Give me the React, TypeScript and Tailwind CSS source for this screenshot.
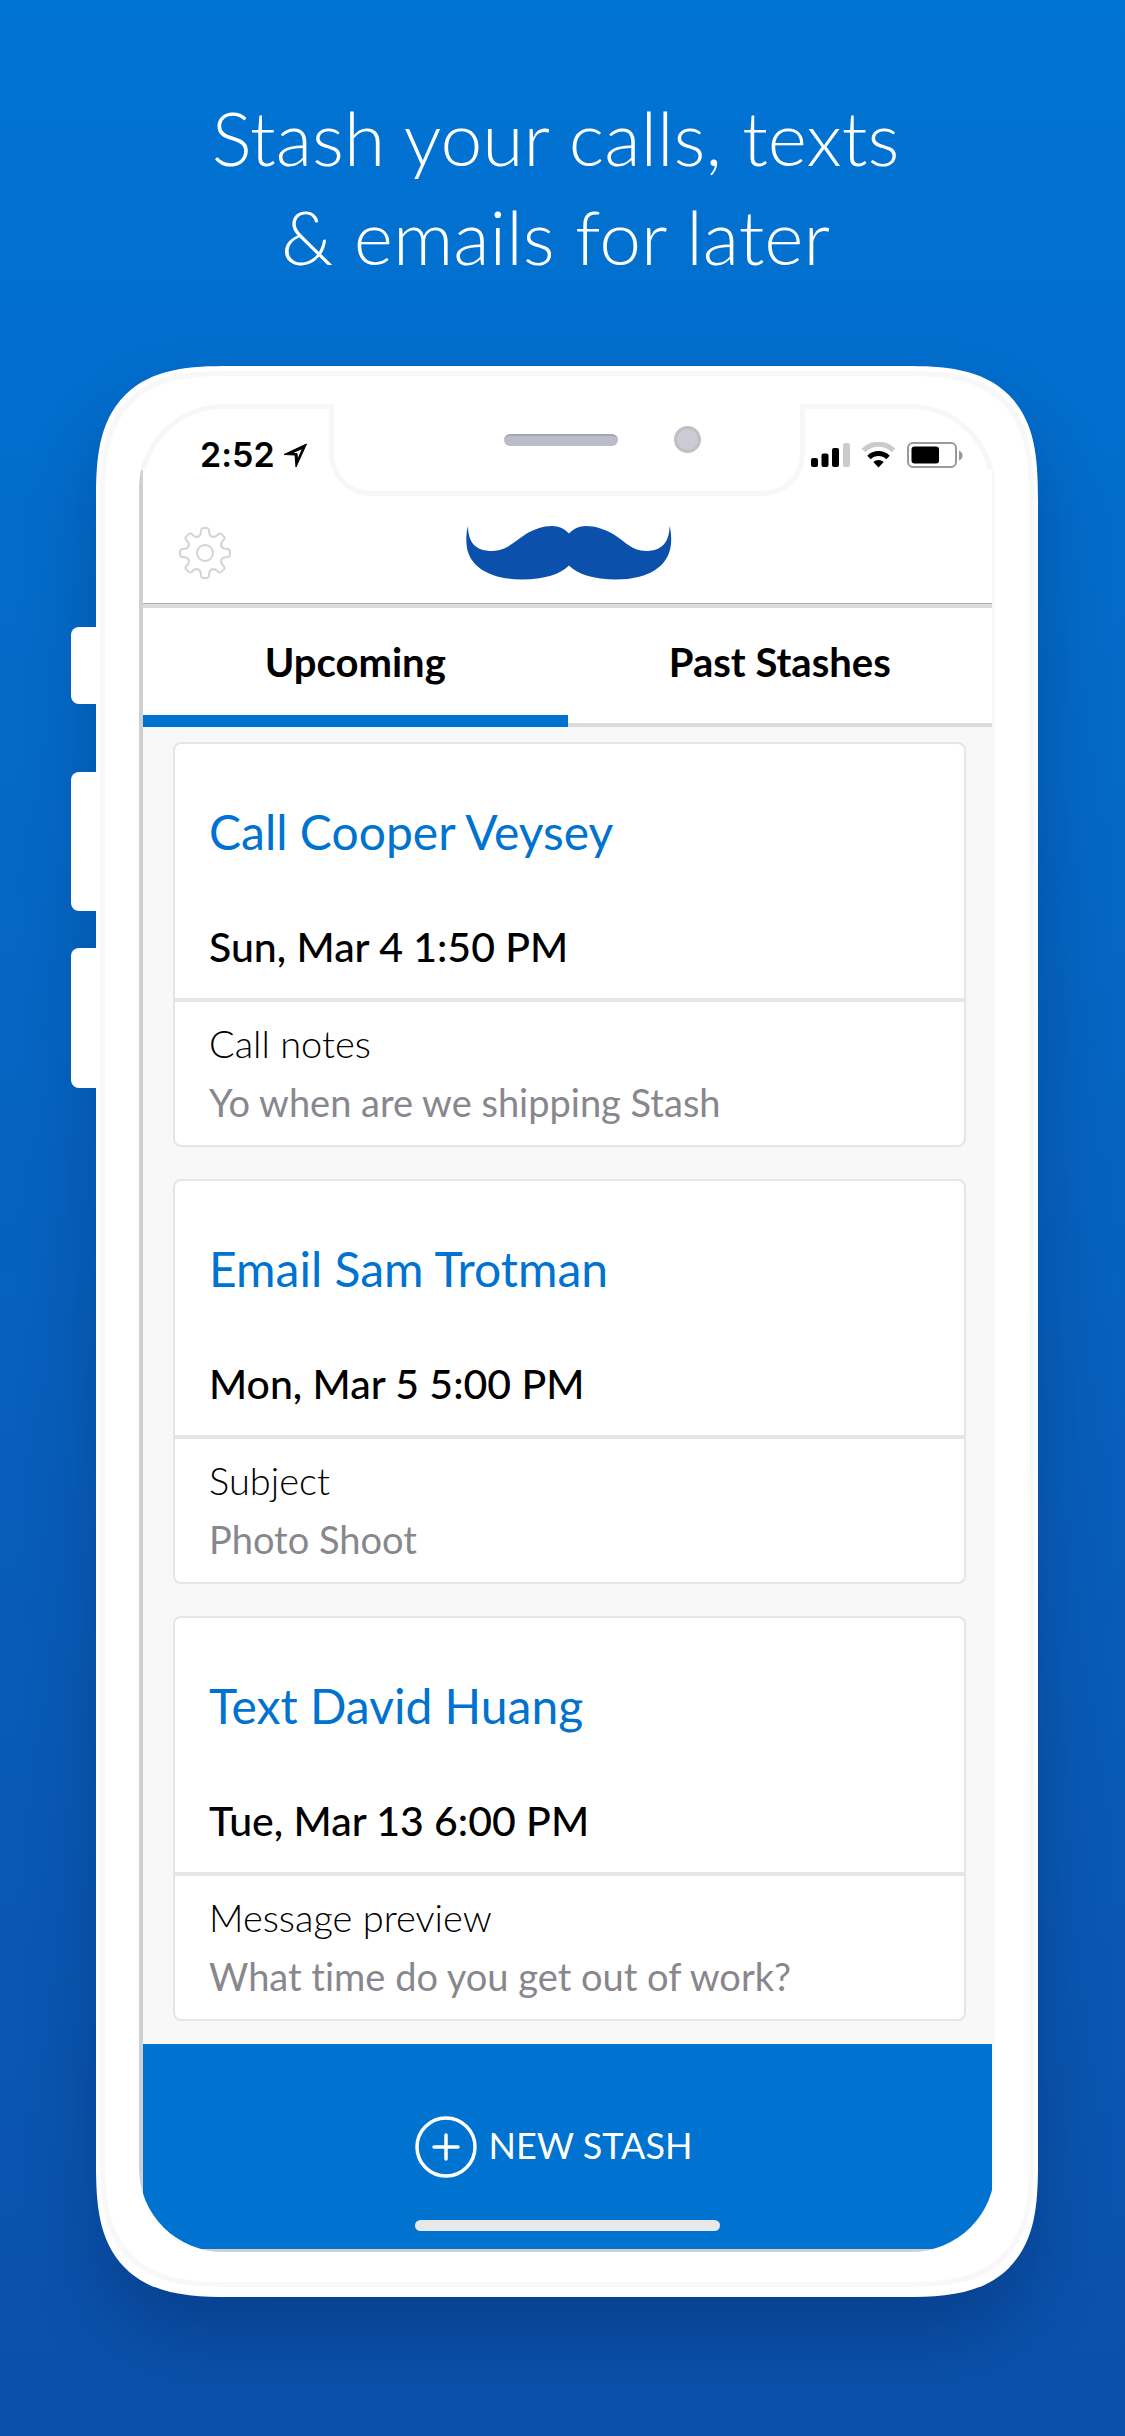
import { useState } from 'react';

const STASHES = [
  { title: 'Call Cooper Veysey', date: 'Sun, Mar 4 1:50 PM', label: 'Call notes', note: 'Yo when are we shipping Stash' },
  { title: 'Email Sam Trotman', date: 'Mon, Mar 5 5:00 PM', label: 'Subject', note: 'Photo Shoot' },
  { title: 'Text David Huang', date: 'Tue, Mar 13 6:00 PM', label: 'Message preview', note: 'What time do you get out of work?' },
];

const TABS = ['Upcoming', 'Past Stashes'];

// eight-toothed cog, drawn on a 52px box
function gearPath() {
  const point = (r: number, deg: number) => {
    const a = (deg * Math.PI) / 180;
    return `${(26 + r * Math.cos(a)).toFixed(2)} ${(26 + r * Math.sin(a)).toFixed(2)}`;
  };
  let d = '';
  for (let i = 0; i < 8; i++) {
    const c = i * 45 - 90;
    d += `${i === 0 ? 'M' : 'L'}${point(19.5, c - 13)} L${point(24, c - 9)} Q${point(25.2, c - 7)} ${point(25, c - 4)} L${point(25, c + 4)} Q${point(25.2, c + 7)} ${point(24, c + 9)} L${point(19.5, c + 13)} Q${point(16.2, c + 22.5)} ${point(19.5, c + 32)} `;
  }
  return d + 'Z';
}

function GearIcon() {
  return (
    <svg className="w-[52px] h-[52px]" viewBox="0 0 52 52" fill="none" stroke="#d4d4d4" strokeWidth="2" strokeLinejoin="round">
      <path d={gearPath()} />
      <circle cx="26" cy="26" r="8" />
    </svg>
  );
}

function Mustache() {
  return (
    <svg className="w-[206px] h-[54px]" viewBox="0 0 206 54" fill="#0b50aa">
      <path d="M2 0C2 17 10 25 26 25C41 25 47 16 60 8C68 3.5 77 0 86 0C93 0 99 3 103 7.500C107 3 113 0 120 0C129 0 139 3.500 147 8C160 16 166 25 180 25C195 25 203.500 17 203.500 0C205 5 205.500 12 205 18C203 40 183 53.500 150 53.500C128 53.500 111 48 103 39.500C95 48 78 53.500 56 53.500C23 53.500 2 40 0.500 18C0 12 0.500 5 2 0Z" />
    </svg>
  );
}

function StatusIcons() {
  return (
    <svg className="w-[152px] h-[26px]" viewBox="0 0 152 26">
      <rect x="0" y="16" width="7" height="9" rx="2" />
      <rect x="10.500" y="11.500" width="7" height="13.500" rx="2" />
      <rect x="21" y="6" width="7" height="19" rx="2" />
      <rect x="32" y="1" width="7" height="24" rx="2" fill="#cbcbcb" />
      <path d="M52.500 8.500a21 21 0 0 1 30 0" fill="none" stroke="#cbcbcb" strokeWidth="5" />
      <path d="M58 15.500a13.500 13.500 0 0 1 19 0" fill="none" stroke="#000" strokeWidth="5" />
      <path d="M62.300 20a7.500 7.500 0 0 1 10.400 0L67.500 25.500z" />
      <rect x="97" y="1" width="48" height="24" rx="5" fill="none" stroke="#999" strokeWidth="2" />
      <rect x="100.500" y="4.500" width="27.500" height="17" rx="3" />
      <path d="M148 8.500q3.500 1.500 3.500 5t-3.500 5z" fill="#999" />
    </svg>
  );
}

function StashCard({ title, date, label, note }: (typeof STASHES)[number]) {
  return (
    <article className="h-[405px] bg-white border-2 border-[#e5e5e5] rounded-lg">
      <div className="h-[258px] px-[34px] border-b-4 border-[#e5e5e5]">
        <h2 className="pt-[58px] text-[48px] leading-[60px] text-[#0073d1]">{title}</h2>
        <p className="pt-[60px] text-[41px] leading-[50px] font-medium">{date}</p>
      </div>
      <div className="px-[34px] pt-3">
        <p className="text-[38px] leading-[59px] font-light">{label}</p>
        <p className="text-[38px] leading-[59px] text-[#87878d]">{note}</p>
      </div>
    </article>
  );
}

function Notch() {
  return (
    <div className="absolute top-0 left-1/2 -translate-x-1/2 w-[476px] h-[92px] border-[5px] border-t-0 border-[#f7f7f7] rounded-b-[42px] bg-white">
      <div className="absolute left-[170px] top-[30px] w-[114px] h-3 rounded-full bg-[#bbbcca] border-t-2 border-[#a6a7b0]" />
      <div className="absolute left-[340px] top-[22px] w-[27px] h-[27px] rounded-full bg-[#cbcbd6] border-[3px] border-[#bfbfc6]" />
    </div>
  );
}

export default function App() {
  const [tab, setTab] = useState(0);

  return (
    <main className="min-h-screen pb-[138px] overflow-hidden bg-gradient-to-b from-[#0074d4] to-[#0b50aa] font-[Lato,sans-serif] text-black [font-variant-ligatures:none]">
      <h1 className="pt-[88px] h-[366px] text-center text-[75px] leading-[99px] font-light text-white pr-[14px]">
        Stash your calls, texts
        <br />
        &amp; emails for later
      </h1>

      <div className="relative ml-24 mr-[87px] rounded-[104px] supports-[corner-shape:squircle]:rounded-[134px] [corner-shape:superellipse(1.5)] bg-white shadow-[0_40px_70px_rgba(0,20,70,0.28)]">
        {/* hardware buttons */}
        <div className="absolute -left-[25px] top-[261px] w-[25px] h-[77px] rounded-l-lg bg-white" />
        <div className="absolute -left-[25px] top-[406px] w-[25px] h-[139px] rounded-l-lg bg-white" />
        <div className="absolute -left-[25px] top-[582px] w-[25px] h-[140px] rounded-l-lg bg-white" />

        <div className="pt-[5px] px-1 pb-[10px]">
          <div className="border-[5px] border-[#f8f8f8] rounded-[100px] supports-[corner-shape:squircle]:rounded-[130px] [corner-shape:superellipse(1.5)] pt-7 px-[34px] pb-[30px]">
            <div className="relative">
              <div className="overflow-hidden rounded-[84px] bg-white">
                <div className="border-l-4 border-l-[#d0d0d0] border-b-[3px] border-b-[#d0d0d0] border-r-[3px] border-r-[#f7f7f7]">
                  <div className="flex justify-between items-center h-[97px] pt-[5px] pl-[57px] pr-[29px]">
                    <div className="flex items-center gap-2">
                      <span className="font-[Inter,sans-serif] font-semibold text-[34px] leading-10">2:52</span>
                      <svg className="w-6 h-6" viewBox="0 0 24 24" stroke="#000" strokeWidth="1">
                        <path d="M1 11.500L23.500 1L13 24L12 12z M8 10.500L14 10.500L14.500 17L19.500 5.500z" fillRule="evenodd" />
                      </svg>
                    </div>
                    <StatusIcons />
                  </div>

                  <header className="grid grid-cols-3 items-center h-[107px] border-b-4 border-[#dcdcdc] shadow-[inset_0_-1px_0_#b0b0b0] pl-9 pr-8">
                    <button aria-label="Settings" className="justify-self-start">
                      <GearIcon />
                    </button>
                    <div className="justify-self-center">
                      <Mustache />
                    </div>
                  </header>

                  <nav className="grid grid-cols-2 h-[119px]">
                    {TABS.map((name, i) => (
                      <button
                        key={name}
                        onClick={() => setTab(i)}
                        className={
                          i === tab
                            ? 'text-[40px] leading-[50px] font-bold pt-1 pb-1 border-b-[12px] border-[#0073d1]'
                            : 'text-[40px] leading-[50px] font-bold pb-2 border-b-4 border-[#dcdcdc]'
                        }
                      >
                        {name}
                      </button>
                    ))}
                  </nav>

                  <section className="flex flex-col gap-8 bg-[#f8f8f8] pt-[15px] pb-[23px] pl-[30px] pr-[26px]">
                    {STASHES.map(s => (
                      <StashCard key={s.title} {...s} />
                    ))}
                  </section>

                  <footer className="h-[205px] bg-[#0073d1] pt-[72px] flex flex-col items-center justify-between pb-[18px]">
                    <button className="flex items-center gap-3 text-white text-[36px] pr-7">
                      <svg className="w-[62px] h-[62px]" viewBox="0 0 62 62" fill="none" stroke="#fff" strokeWidth="3.500" strokeLinecap="round">
                        <circle cx="31" cy="31" r="29" />
                        <path d="M31 19v24M19 31h24" />
                      </svg>
                      <span className="leading-[58px] pb-1">NEW STASH</span>
                    </button>
                    <div className="w-[305px] h-[11px] rounded-full bg-[#e8e8e8]" />
                  </footer>
                </div>
              </div>

              {/* top edge of the glass */}
              <div className="absolute inset-x-0 top-0 h-[66px] overflow-hidden pointer-events-none">
                <div className="h-[180px] border-[5px] border-[#f7f7f7] rounded-[84px]" />
              </div>
              <Notch />
            </div>
          </div>
        </div>
      </div>
    </main>
  );
}
